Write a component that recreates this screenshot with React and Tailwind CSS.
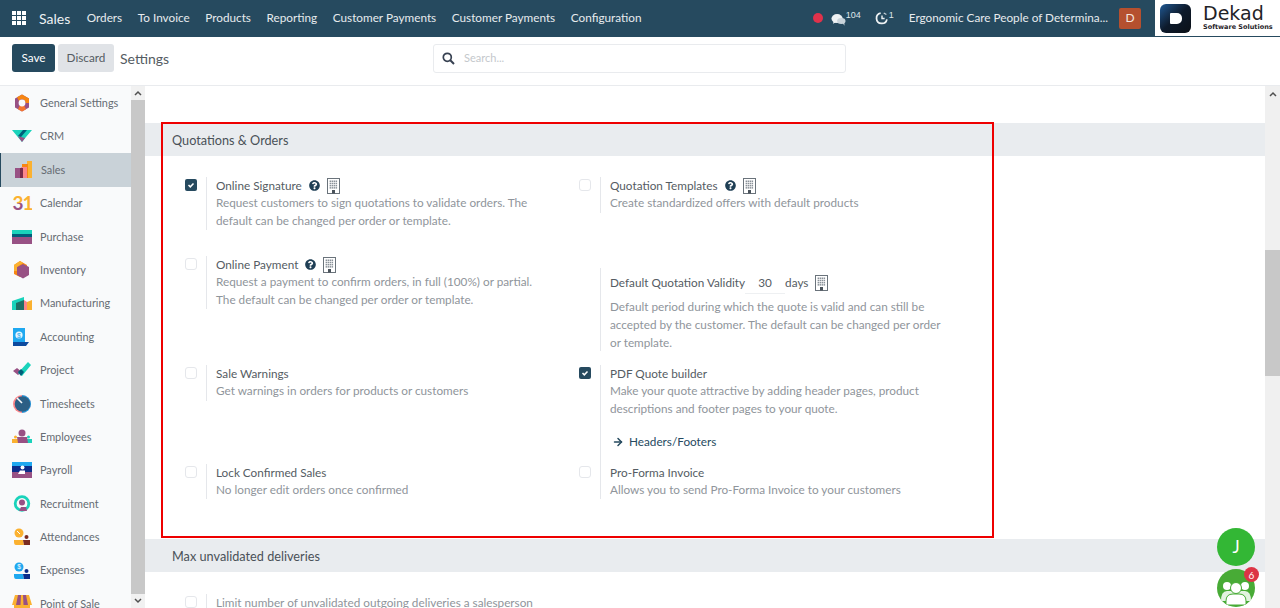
import { FaQuestionCircle } from 'react-icons/fa';
import { ArrowRight } from 'lucide-react';

const apps = [
  'General Settings', 'CRM', 'Sales', 'Calendar', 'Purchase', 'Inventory', 'Manufacturing', 'Accounting',
  'Project', 'Timesheets', 'Employees', 'Payroll', 'Recruitment', 'Attendances', 'Expenses', 'Point of Sale',
];

const menu = ['Orders', 'To Invoice', 'Products', 'Reporting', 'Customer Payments', 'Customer Payments', 'Configuration'];

function AppIcon({ name }) {
  const p = { width: 20, height: 20, viewBox: '0 0 20 20', className: 'shrink-0' };
  switch (name) {
    case 'General Settings':
      return (
        <svg {...p}>
          <path d="M10 1.5 17 5.5V14.5L10 18.5 3 14.5V5.5Z" fill="#985184" />
          <path d="M10 1.5 17 5.5V10H13.5A3.5 3.5 0 0 0 7 8L5 4.3Z" fill="#f78613" />
          <path d="M6 16.3 10 18.5 14 16.3 12.5 13H7.5Z" fill="#f4762f" />
          <circle cx="10" cy="10" r="3.4" fill="#f9fafb" />
        </svg>
      );
    case 'CRM':
      return (
        <svg {...p}>
          <path d="M0 3H20L14 10 10 15 0 3Z" fill="#1ad3bb" />
          <path d="M6 9 11 3H15L9 10Z" fill="#005e7a" />
          <path d="M6 9.5 10 15 13 11 9 10Z" fill="#985184" />
        </svg>
      );
    case 'Sales':
      return (
        <svg {...p}>
          <rect x="14" y="1" width="5" height="17" fill="#fbb130" />
          <rect x="9" y="4" width="6" height="14" fill="#f78613" />
          <rect x="8" y="7" width="6" height="11" fill="#fc868b" />
          <rect x="2" y="8" width="7" height="10" fill="#985184" />
          <rect x="7" y="8" width="3" height="10" fill="#7a2b4a" />
        </svg>
      );
    case 'Calendar':
      return (
        <svg {...p}>
          <defs>
            <linearGradient id="cal3" x1="0" y1="0" x2="0" y2="1">
              <stop offset="0.5" stopColor="#fbb130" />
              <stop offset="0.55" stopColor="#985184" />
            </linearGradient>
          </defs>
          <text x="0.5" y="17" fontSize="19" fontWeight="700" fill="url(#cal3)" fontFamily="Lato">3</text>
          <text x="10.5" y="17" fontSize="19" fontWeight="700" fill="#fbb130" fontFamily="Lato">1</text>
        </svg>
      );
    case 'Purchase':
      return (
        <svg {...p}>
          <rect x="0" y="3" width="20" height="4" fill="#1ad3bb" />
          <rect x="0" y="7" width="20" height="3" fill="#005e7a" />
          <rect x="0" y="10" width="20" height="7" fill="#985184" />
        </svg>
      );
    case 'Inventory':
      return (
        <svg {...p}>
          <path d="M8 1 15 5V14L8 17 2 14V5Z" fill="#f78613" />
          <path d="M11 4 17 7V15L11 18.5 5 15V7Z" fill="#985184" />
          <path d="M8 1 11 3 5 7V11H2V5Z" fill="#fbb130" />
        </svg>
      );
    case 'Manufacturing':
      return (
        <svg {...p}>
          <path d="M0 7 12 3V16H0Z" fill="#1ad3bb" />
          <path d="M4 9 12 6V16H4Z" fill="#1f6f66" />
          <path d="M12 6 15 8V16H12Z" fill="#fc868b" />
          <path d="M15 8 20 6V16H15Z" fill="#fbb130" />
        </svg>
      );
    case 'Accounting':
      return (
        <svg {...p}>
          <path d="M1 1H13V15H1Z" fill="#1fa8f0" />
          <path d="M1 15H17L14 19H1Z" fill="#0d4a9e" />
          <circle cx="7" cy="8" r="3.6" fill="#fff" opacity="0.9" />
          <text x="7" y="10.5" fontSize="7" textAnchor="middle" fill="#1fa8f0" fontFamily="Liberation Sans">$</text>
        </svg>
      );
    case 'Project':
      return (
        <svg {...p}>
          <path d="M1 11 5 8 10 12 6 15Z" fill="#985184" />
          <path d="M6 13 16 2 19 5 10 16Z" fill="#1ad3bb" />
          <path d="M6 12 9 9 12 12 9 16Z" fill="#005e7a" />
        </svg>
      );
    case 'Timesheets':
      return (
        <svg {...p}>
          <circle cx="10" cy="10" r="9" fill="#fc868b" />
          <path d="M10 1A9 9 0 0 1 10 19Z" fill="#1fa8f0" />
          <circle cx="10.5" cy="10" r="7.8" fill="#2c5f85" />
          <path d="M5 4 10 9" stroke="#f9fafb" strokeWidth="1.6" />
        </svg>
      );
    case 'Employees':
      return (
        <svg {...p}>
          <circle cx="10" cy="6" r="3.5" fill="#985184" />
          <circle cx="3.5" cy="10" r="1.5" fill="#fbb130" />
          <circle cx="16.5" cy="10" r="1.5" fill="#1ad3bb" />
          <rect x="0" y="12" width="7" height="4" fill="#fbb130" />
          <rect x="13" y="12" width="7" height="4" fill="#1ad3bb" />
          <path d="M5 10H15L16 16H6Z" fill="#985184" />
        </svg>
      );
    case 'Payroll':
      return (
        <svg {...p}>
          <rect x="0" y="2" width="20" height="4" fill="#1fa8f0" />
          <rect x="0" y="6" width="20" height="6" fill="#0d2d8a" />
          <rect x="0" y="12" width="20" height="6" fill="#985184" />
          <circle cx="10.5" cy="7.5" r="2" fill="#fff" />
          <path d="M6 14 8 10.5H13V14Z" fill="#fff" />
        </svg>
      );
    case 'Recruitment':
      return (
        <svg {...p}>
          <circle cx="10" cy="9.5" r="6.8" fill="none" stroke="#1ad3bb" strokeWidth="2.8" />
          <circle cx="10" cy="8.5" r="3" fill="#985184" />
          <path d="M7 17 9 13H14L15 17Z" fill="#985184" />
        </svg>
      );
    case 'Attendances':
      return (
        <svg {...p}>
          <circle cx="7" cy="6" r="4.5" fill="#fbb130" />
          <path d="M5 4 8 7" stroke="#fff" strokeWidth="1" />
          <circle cx="14.5" cy="10" r="2" fill="#7a2b20" />
          <path d="M2 13H11L12 18H4Q2 18 2 15Z" fill="#fbb130" />
          <path d="M11 13H18V18H12Z" fill="#7a2b20" />
        </svg>
      );
    case 'Expenses':
      return (
        <svg {...p}>
          <circle cx="7" cy="6" r="4.5" fill="#1fa8f0" />
          <text x="7" y="8.4" fontSize="6.5" textAnchor="middle" fill="#fff" fontFamily="Liberation Sans">$</text>
          <circle cx="14.5" cy="10" r="2" fill="#0d2d8a" />
          <path d="M2 13H11L12 18H4Q2 18 2 15Z" fill="#1fa8f0" />
          <path d="M11 13H18V18H12Z" fill="#0d2d8a" />
        </svg>
      );
    default:
      return (
        <svg {...p}>
          <path d="M3 1H17L20 11H0Z" fill="#fbb130" />
          <path d="M6 1H9L8.5 11H4Z M11 1H14L16 11H11.5Z" fill="#985184" />
          <rect x="2" y="11" width="16" height="8" fill="#fbb130" />
        </svg>
      );
  }
}

function Building() {
  const rows = [2.5, 4.7, 6.9, 9.1];
  const cols = [2.6, 4.6, 6.6, 8.6];
  return (
    <svg width="13" height="16" viewBox="0 0 13 16" className="ml-[7px] shrink-0">
      <rect x="0.5" y="0.5" width="12" height="15" fill="none" stroke="#6a737b" />
      {rows.map((y) =>
        cols.map((x) => <rect key={`${x}-${y}`} x={x} y={y} width="1.5" height="1.5" fill="#8a9299" />),
      )}
      <rect x="5" y="12" width="3" height="3.5" fill="#4a535b" />
    </svg>
  );
}

function Check({ checked }) {
  if (checked) {
    return (
      <span className="flex h-[12px] w-[12px] items-center justify-center rounded-[2px] bg-[#264a5f]">
        <svg width="8" height="8" viewBox="0 0 8 8">
          <path d="M1.5 4 3.3 5.8 6.5 2.4" fill="none" stroke="#fff" strokeWidth="1.5" />
        </svg>
      </span>
    );
  }
  return <span className="h-[12px] w-[12px] rounded-[3px] border border-[#e5e7eb] bg-white" />;
}

function Setting({ checked, title, help, building, children, offset = '' }) {
  return (
    <div className={`flex w-[394px] ${offset}`}>
      <div className="flex w-[61px] shrink-0 justify-end pr-[9px] pt-[2px]">
        {checked !== undefined && <Check checked={checked} />}
      </div>
      <div className="w-[345px] shrink-0 border-l border-[#e5e7eb] pl-[9px] text-[11.75px] leading-[18px] text-[#8f959b]">
        {title && (
          <div className="flex h-[17px] items-center text-[#555c63]">
            <span>{title}</span>
            {help && <FaQuestionCircle className="ml-[7px] shrink-0 text-[11px] text-[#1f3f55]" />}
            {building && <Building />}
          </div>
        )}
        {children}
      </div>
    </div>
  );
}

export default function App() {
  return (
    <div className="relative flex h-[608px] w-[1280px] flex-col overflow-hidden bg-white font-['Lato',sans-serif]">
      {/* top navbar */}
      <div className="flex h-[37px] shrink-0 items-center bg-[#264a5f] pb-[1px] text-white">
        <div className="ml-[12px] grid h-[14px] w-[14px] grid-cols-3 gap-[1px]">
          {Array.from({ length: 9 }).map((_, i) => (
            <span key={i} className="bg-white" />
          ))}
        </div>
        <span className="ml-[13px] text-[14px] text-[#eef2f4]">Sales</span>
        <div className="ml-[16.5px] flex gap-[15.6px] text-[11.75px] text-[#e6ebee]">
          {menu.map((m, i) => (
            <span key={i}>{m}</span>
          ))}
        </div>
        <div className="ml-auto flex h-full items-center">
          <span className="h-[10px] w-[10px] rounded-full bg-[#e0324b]" />
          <svg width="15" height="14" viewBox="0 0 16 14" className="ml-[8px] mt-[3px]">
            <ellipse cx="6.5" cy="5.5" rx="6" ry="4.8" fill="#eef2f4" />
            <path d="M3 8 2 11 6 9Z" fill="#eef2f4" />
            <ellipse cx="11" cy="8" rx="4.5" ry="3.2" fill="#c8d3da" />
            <path d="M12 10 14.5 13 14 9Z" fill="#c8d3da" />
          </svg>
          <span className="mb-[6px] text-[9px] leading-none font-['Liberation_Sans',sans-serif] text-[#dfe6ea]">104</span>
          <svg width="14" height="16" viewBox="0 0 16 16" className="ml-[14px]">
            <path d="M6.5 2.4A6 6 0 1 0 13.6 9.5" fill="none" stroke="#eef2f4" strokeWidth="2" />
            <path d="M8 5V8.5H11" fill="none" stroke="#eef2f4" strokeWidth="1.6" />
            <path d="M10 2.2 13 4" stroke="#c8d3da" strokeWidth="1.4" />
          </svg>
          <span className="mb-[6px] text-[9px] leading-none font-['Liberation_Sans',sans-serif] text-[#dfe6ea]">1</span>
          <span className="ml-[15px] text-[11.75px] text-[#e6ebee]">Ergonomic Care People of Determina...</span>
          <span className="ml-[11px] flex h-[21px] w-[22px] items-center justify-center rounded-[2px] bg-[#b5502f] text-[12px] text-[#f3e4dd]">
            D
          </span>
          <div className="ml-[14px] flex h-[36px] w-[125px] items-center self-start bg-white pl-[5px]">
            <span className="flex h-[29px] w-[31px] items-center justify-center rounded-[6px] bg-gradient-to-br from-[#1f5a96] via-[#0d1a2b] to-[#0b1017]">
              <span className="h-[11px] w-[12px] rounded-r-[5px] rounded-l-[1px] bg-white" />
            </span>
            <div className="ml-[12px] flex flex-col text-[#1f2328] font-['DejaVu_Sans',sans-serif]">
              <span className="text-[19px] leading-[19px]">Dekad</span>
              <span className="text-[6.5px] leading-[9px] font-semibold">Software Solutions</span>
            </div>
          </div>
        </div>
      </div>

      {/* control panel */}
      <div className="flex h-[49px] shrink-0 items-center border-b border-[#e9ebee] bg-white pb-[6px] pl-[12px]">
        <button className="h-[28px] w-[43px] rounded-[3px] bg-[#264a5f] text-[11.75px] text-white">Save</button>
        <button className="ml-[3px] h-[28px] w-[56px] rounded-[3px] bg-[#e0e3e7] text-[11.75px] text-[#555c63]">Discard</button>
        <span className="ml-[6px] w-[50px] text-[14px] text-[#555c63]">Settings</span>
        <div className="ml-[263px] flex h-[29px] w-[413px] items-center rounded-[3px] border border-[#e9ebee] pl-[8px]">
          <svg width="13" height="13" viewBox="0 0 13 13">
            <circle cx="5.3" cy="5.3" r="4" fill="none" stroke="#374151" strokeWidth="1.7" />
            <path d="M8.3 8.3 12 12" stroke="#374151" strokeWidth="2" />
          </svg>
          <span className="ml-[9px] text-[11px] text-[#c4c8cc]">Search...</span>
        </div>
      </div>

      <div className="flex min-h-0 flex-1">
        {/* app sidebar */}
        <div className="w-[131px] shrink-0 overflow-hidden bg-[#f9fafb] pt-[0.5px]">
          {apps.map((a) => (
            <div
              key={a}
              className={`flex h-[33.4px] items-center pl-[12px] text-[10.9px] text-[#666c73] ${
                a === 'Sales' ? 'border-l border-[#264a5f] bg-[#c9d2d8] pl-[11px]' : ''
              }`}
            >
              <AppIcon name={a} />
              <span className="ml-[8px] whitespace-nowrap">{a}</span>
            </div>
          ))}
        </div>
        <div className="flex w-[14px] shrink-0 flex-col bg-[#c8c8c8]">
          <div className="flex h-[14px] items-center justify-center bg-[#f1f1f1]">
            <svg width="8" height="6" viewBox="0 0 8 6">
              <path d="M1 5 4 2 7 5" fill="none" stroke="#505050" strokeWidth="1.5" />
            </svg>
          </div>
          <div className="flex-1" />
          <div className="flex h-[14px] items-center justify-center bg-[#f1f1f1]">
            <svg width="8" height="6" viewBox="0 0 8 6">
              <path d="M1 1 4 4 7 1" fill="none" stroke="#505050" strokeWidth="1.5" />
            </svg>
          </div>
        </div>

        {/* settings content */}
        <div className="min-w-0 flex-1 overflow-hidden pt-[37px]">
          <div className="flex h-[33px] items-center bg-[#e9ecef] pl-[27px] pt-[2px] text-[12.7px] text-[#4a5158]">Quotations &amp; Orders</div>
          <div className="h-[383px] pt-[21px]">
            <div className="flex h-[79px]">
              <Setting checked title="Online Signature" help building offset="h-[53px]">
                Request customers to sign quotations to validate orders. The default can be changed per order or template.
              </Setting>
              <Setting checked={false} title="Quotation Templates" help building offset="h-[36px]">
                Create standardized offers with default products
              </Setting>
            </div>
            <div className="flex h-[109px]">
              <Setting checked={false} title="Online Payment" help building offset="h-[53px]">
                Request a payment to confirm orders, in full (100%) or partial. The default can be changed per order or template.
              </Setting>
              <Setting offset="mt-[12px] h-[83px]">
                <div className="mt-[6px] flex h-[24px] items-start text-[#555c63]">
                  <span className="leading-[18px]">Default Quotation Validity</span>
                  <span className="h-[20px] w-[40px] border-b border-[#eef0f2] text-center leading-[18px]">30</span>
                  <span className="leading-[18px]">days</span>
                  <span className="mt-[1px]"><Building /></span>
                </div>
                Default period during which the quote is valid and can still be accepted by the customer. The default can be changed per order or template.
              </Setting>
            </div>
            <div className="flex h-[99px]">
              <Setting checked={false} title="Sale Warnings" offset="h-[36px]">
                Get warnings in orders for products or customers
              </Setting>
              <Setting checked title="PDF Quote builder">
                Make your quote attractive by adding header pages, product descriptions and footer pages to your quote.
                <div className="mt-[15px] flex h-[18px] items-center text-[#264a5f]">
                  <ArrowRight size={12} strokeWidth={3} className="ml-[2px] mr-[5px]" />
                  Headers/Footers
                </div>
              </Setting>
            </div>
            <div className="flex">
              <Setting checked={false} title="Lock Confirmed Sales">
                No longer edit orders once confirmed
              </Setting>
              <Setting checked={false} title="Pro-Forma Invoice">
                Allows you to send Pro-Forma Invoice to your customers
              </Setting>
            </div>
          </div>
          <div className="flex h-[33px] items-center bg-[#e9ecef] pl-[27px] pt-[2px] text-[12.7px] text-[#4a5158]">Max unvalidated deliveries</div>
          <div className="pt-[22px]">
            <Setting checked={false}>
              <div className="h-[18px] whitespace-nowrap">Limit number of unvalidated outgoing deliveries a salesperson</div>
            </Setting>
          </div>
        </div>

        {/* main scrollbar */}
        <div className="flex w-[15px] shrink-0 flex-col bg-[#f0f0f0]">
          <div className="flex h-[15px] items-center justify-center">
            <svg width="8" height="6" viewBox="0 0 8 6">
              <path d="M1 5 4 2 7 5" fill="none" stroke="#505050" strokeWidth="1.5" />
            </svg>
          </div>
          <div className="mt-[149px] h-[126px] bg-[#c8c8c8]" />
        </div>
      </div>

      {/* highlight box around the section */}
      <div className="pointer-events-none absolute left-[161px] top-[122px] h-[416px] w-[833px] border-[2px] border-[#ee0000]" />

      {/* floating chat buttons */}
      <div className="absolute left-[1217px] top-[528px] flex h-[38px] w-[38px] items-center justify-center rounded-full bg-[#33b735] text-[17px] text-white">J</div>
      <div className="absolute left-[1217px] top-[569px] flex h-[38px] w-[38px] items-end justify-center overflow-hidden rounded-full bg-[#48ab36]">
        <svg width="30" height="30" viewBox="0 0 30 30">
          <circle cx="6" cy="9" r="4" fill="#fff" />
          <circle cx="24" cy="9" r="4" fill="#fff" />
          <path d="M0 24Q0 14 6 14H24Q30 14 30 24Z" fill="#fff" opacity="0.85" />
          <circle cx="15" cy="11" r="5.5" fill="#fff" stroke="#48ab36" strokeWidth="1" />
          <path d="M5 28V24Q5 17 12 17H18Q25 17 25 24V28Z" fill="#fff" stroke="#48ab36" strokeWidth="1" />
        </svg>
      </div>
      <div className="absolute left-[1244px] top-[567px] flex h-[15px] w-[15px] items-center justify-center rounded-full bg-[#dc3545] text-[10px] leading-none text-white">6</div>
    </div>
  );
}
